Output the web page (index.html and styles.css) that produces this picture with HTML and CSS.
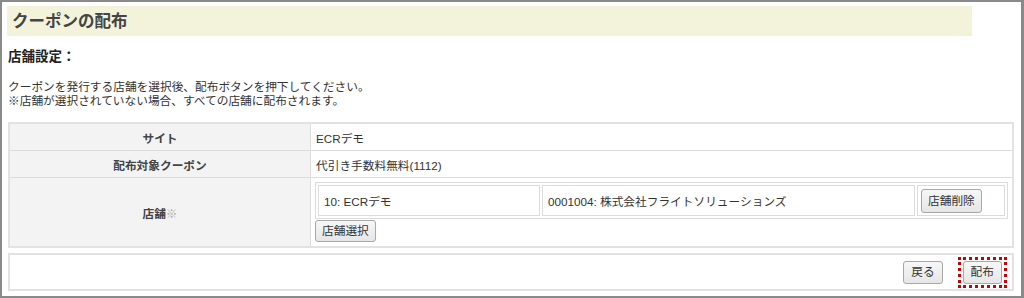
FILE: index.html
```html
<!DOCTYPE html>
<html lang="ja">
<head>
<meta charset="utf-8">
<link rel="stylesheet" href="styles.css">
</head>
<body>
<div class="frame">
  <h2 class="page-title">クーポンの配布</h2>
  <h3 class="section-title">店舗設定：</h3>
  <p class="note">クーポンを発行する店舗を選択後、配布ボタンを押下してください。<br>※店舗が選択されていない場合、すべての店舗に配布されます。</p>
  <table class="form-table">
    <tr class="row-short">
      <th>サイト</th>
      <td>ECRデモ</td>
    </tr>
    <tr class="row-short">
      <th>配布対象クーポン</th>
      <td>代引き手数料無料(1112)</td>
    </tr>
    <tr>
      <th>店舗<span class="mark">※</span></th>
      <td class="shops-cell">
        <table class="shop-list">
          <tr>
            <td class="c1">10: ECRデモ</td>
            <td class="c2">0001004: 株式会社フライトソリューションズ</td>
            <td class="c3"><button class="btn">店舗削除</button></td>
          </tr>
        </table>
        <button class="btn btn-select">店舗選択</button>
      </td>
    </tr>
  </table>
  <div class="footer">
    <button class="btn">戻る</button>
    <span class="focus-ring"><button class="btn">配布</button></span>
  </div>
</div>
</body>
</html>
```
FILE: styles.css
```css
html, body {
  margin: 0;
  padding: 0;
  background: #fff;
}
body {
  font-family: "Liberation Sans", "Noto Sans CJK JP", sans-serif;
  color: #333;
}
.frame {
  box-sizing: border-box;
  width: 1024px;
  height: 298px;
  border: 2px solid #8a8a8a;
  border-right-width: 3px;
  padding: 4px 7px 0 5px;
  overflow: hidden;
}
.page-title {
  margin: 0;
  width: 965px;
  height: 30px;
  box-sizing: border-box;
  background: #f3f3dc;
  font-size: 16.5px;
  font-weight: bold;
  color: #444;
  line-height: 30px;
  padding-left: 5px;
}
.section-title {
  margin: 12px 0 0 1px;
  font-size: 13.5px;
  line-height: 18px;
  font-weight: bold;
  color: #222;
}
.note {
  margin: 14px 0 0 1px;
  font-size: 11.7px;
  line-height: 14px;
  color: #333;
}
.form-table {
  margin: 14px 0 0 1px;
  width: 1006px;
  border-collapse: collapse;
  border: 2px solid #e2e2e2;
  font-size: 11.7px;
}
.form-table th,
.form-table > tbody > tr > td {
  border: 1px solid #dcdcdc;
}
.form-table th {
  width: 300px;
  background: #f3f3f3;
  color: #444;
  font-weight: bold;
  text-align: center;
  padding: 0;
}
.form-table > tbody > tr > td {
  padding: 0 5px;
  color: #333;
}
.row-short th, .row-short td {
  height: 26px;
}
.mark {
  color: #aaa;
  font-weight: normal;
}
.form-table > tbody > tr > td.shops-cell {
  padding: 4px 4px 3px 4px;
  height: 61px;
  vertical-align: top;
}
.shop-list {
  width: 100%;
  border: 1px solid #dcdcdc;
  border-spacing: 2px;
  font-size: 11.7px;
}
.shop-list td {
  border: 1px solid #dcdcdc;
  height: 29px;
  padding: 0 5px;
}
.shop-list .c1 { width: 210px; }
.shop-list .c3 { width: 80px; padding: 0 3px; }
.btn {
  font-family: "Liberation Sans", "Noto Sans CJK JP", sans-serif;
  font-size: 11.7px;
  color: #333;
  background: linear-gradient(#f7f7f7, #e6e6e6);
  border: 1px solid #a8a8a8;
  border-radius: 3px;
  padding: 0 6px;
  height: 22px;
  line-height: 20px;
  margin: 0;
}
.shop-list .btn {
  height: 24px;
}
.btn-select {
  display: block;
  margin-top: 1px;
}
.footer {
  margin: 5px 0 0 1px;
  width: 1006px;
  height: 38px;
  box-sizing: border-box;
  border: 2px solid #e2e2e2;
  display: flex;
  justify-content: flex-end;
  align-items: center;
  gap: 15px;
  padding-right: 5px;
}
.footer .btn {
  height: 23px;
  padding: 0 7px;
}
.focus-ring {
  display: inline-flex;
  padding: 1px 2px;
  border: 3px dotted #cc0000;
}
```
